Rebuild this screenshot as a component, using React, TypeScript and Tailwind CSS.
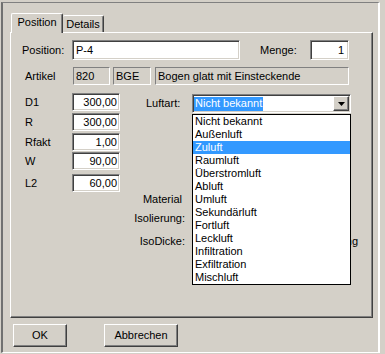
import React from 'react';

const sunken =
  'border border-t-[#808080] border-l-[#808080] border-b-white border-r-white shadow-[inset_1px_1px_0_#404040,inset_-1px_-1px_0_#d4d0c8]';
const flat = 'border border-t-[#808080] border-l-[#808080] border-b-white border-r-white';
const raised =
  'border border-t-white border-l-white border-b-[#404040] border-r-[#404040] shadow-[inset_-1px_-1px_0_#808080]';

const luftarten = [
  'Nicht bekannt',
  'Außenluft',
  'Zuluft',
  'Raumluft',
  'Überstromluft',
  'Abluft',
  'Umluft',
  'Sekundärluft',
  'Fortluft',
  'Leckluft',
  'Infiltration',
  'Exfiltration',
  'Mischluft',
];

const masse = [
  { label: 'D1', value: '300,00', mt: 'mt-0' },
  { label: 'R', value: '300,00', mt: 'mt-[2px]' },
  { label: 'Rfakt', value: '1,00', mt: 'mt-[2px]' },
  { label: 'W', value: '90,00', mt: 'mt-[1px]' },
  { label: 'L2', value: '60,00', mt: 'mt-[4px]' },
];

export default function App() {
  return (
    <div className="w-[385px] h-[354px] bg-[#d4d0c8] overflow-hidden font-['Liberation_Sans',Arial,sans-serif] text-[11px] leading-[13px] text-black">
      {/* Fensterrahmen */}
      <div className="ml-[1px] mt-[2px] w-[379px] h-[351px] border-l-2 border-t border-l-[#707070] border-t-[#808080] border-r-2 border-b border-r-white border-b-white">
        <div className="ml-[7px] mt-[10px]">
          {/* Reiter */}
          <div className="relative z-10 flex items-end h-[20px] pl-[1px]">
            <div className="h-[20px] w-[52px] bg-[#d4d0c8] border-l border-t border-r border-l-white border-t-white border-r-[#404040] rounded-t-[2px] shadow-[inset_-1px_0_0_#808080] flex items-center justify-center pb-[2px]">
              Position
            </div>
            <div className="h-[17px] mb-[1px] w-[41px] border-t border-r border-t-white border-r-[#404040] rounded-t-[2px] shadow-[inset_-1px_0_0_#808080] flex items-center justify-center">
              Details
            </div>
          </div>

          {/* Reiterinhalt */}
          <div className="-mt-px w-[363px] h-[286px] border-l border-t border-l-white border-t-white border-r border-b border-r-[#404040] border-b-[#404040] shadow-[inset_-1px_-1px_0_#808080]">
            <div className="mt-[7px] flex items-center h-[20px] pl-[11px]">
              <span className="w-[50px]">Position:</span>
              <div className={`${sunken} w-[168px] h-[20px] bg-white pl-[3px] flex items-center`}>P-4</div>
              <span className="ml-[20px] w-[50px]">Menge:</span>
              <div className={`${sunken} w-[39px] h-[20px] bg-white pr-[4px] flex items-center justify-end`}>1</div>
            </div>

            <div className="mt-[7px] flex items-center h-[18px] pl-[14px]">
              <span className="w-[48px]">Artikel</span>
              <div className={`${flat} w-[37px] h-[18px] pl-[2px] flex items-center`}>820</div>
              <div className={`${flat} ml-[3px] w-[38px] h-[18px] pl-[2px] flex items-center`}>BGE</div>
              <div className={`${flat} ml-[4px] w-[194px] h-[18px] pl-[2px] flex items-center`}>Bogen glatt mit Einsteckende</div>
            </div>

            <div className="mt-[8px] flex items-start">
              <div className="pl-[14px] flex flex-col">
                {masse.map((m) => (
                  <div key={m.label} className={`${m.mt} flex items-center`}>
                    <span className="w-[47px]">{m.label}</span>
                    <div className={`${sunken} w-[48px] h-[18px] bg-white pr-[2px] flex items-center justify-end`}>
                      {m.value}
                    </div>
                  </div>
                ))}
              </div>

              <div className="ml-[10px] flex flex-col">
                <div className="mt-[1px] flex items-center">
                  <span className="w-[62px] pl-[16px]">Luftart:</span>
                  <div className="relative">
                    <div className={`${sunken} w-[159px] h-[19px] bg-white flex items-center pl-[1px] pr-[1px]`}>
                      <span className="bg-[#3399ff] text-white px-[1px] h-[14px] flex items-center">Nicht bekannt</span>
                      <div className={`${raised} ml-auto w-[16px] h-[15px] bg-[#d4d0c8] flex items-center justify-center`}>
                        <svg width="7" height="4" viewBox="0 0 7 4">
                          <polygon points="0,0 7,0 3.5,4" fill="#000" />
                        </svg>
                      </div>
                    </div>
                    {/* aufgeklappte Liste */}
                    <div className="absolute left-0 top-[20px] z-20 w-[159px] border border-black bg-white">
                      {luftarten.map((l) => (
                        <div
                          key={l}
                          className={`h-[13px] pl-[2px] flex items-center whitespace-nowrap ${
                            l === 'Zuluft' ? 'bg-[#3399ff] text-white' : ''
                          }`}
                        >
                          {l}
                        </div>
                      ))}
                    </div>
                  </div>
                </div>

                <div className="mt-[80px] flex">
                  <span className="w-[55px] text-right pr-[3px]">Material</span>
                </div>
                <div className="mt-[6px] flex">
                  <span className="w-[55px] text-right">Isolierung:</span>
                </div>
                <div className="mt-[10px] flex">
                  <span className="w-[55px] text-right">IsoDicke:</span>
                  <span className="w-[173px] text-right whitespace-nowrap">keine Dämmung</span>
                </div>
              </div>
            </div>
          </div>

          {/* Knöpfe */}
          <div className="mt-[6px] ml-[3px] flex">
            <button className={`${raised} w-[54px] h-[23px] bg-[#d4d0c8] flex items-center justify-center`}>OK</button>
            <button className={`${raised} ml-[37px] w-[74px] h-[23px] bg-[#d4d0c8] flex items-center justify-center`}>
              Abbrechen
            </button>
          </div>
        </div>
      </div>
    </div>
  );
}
